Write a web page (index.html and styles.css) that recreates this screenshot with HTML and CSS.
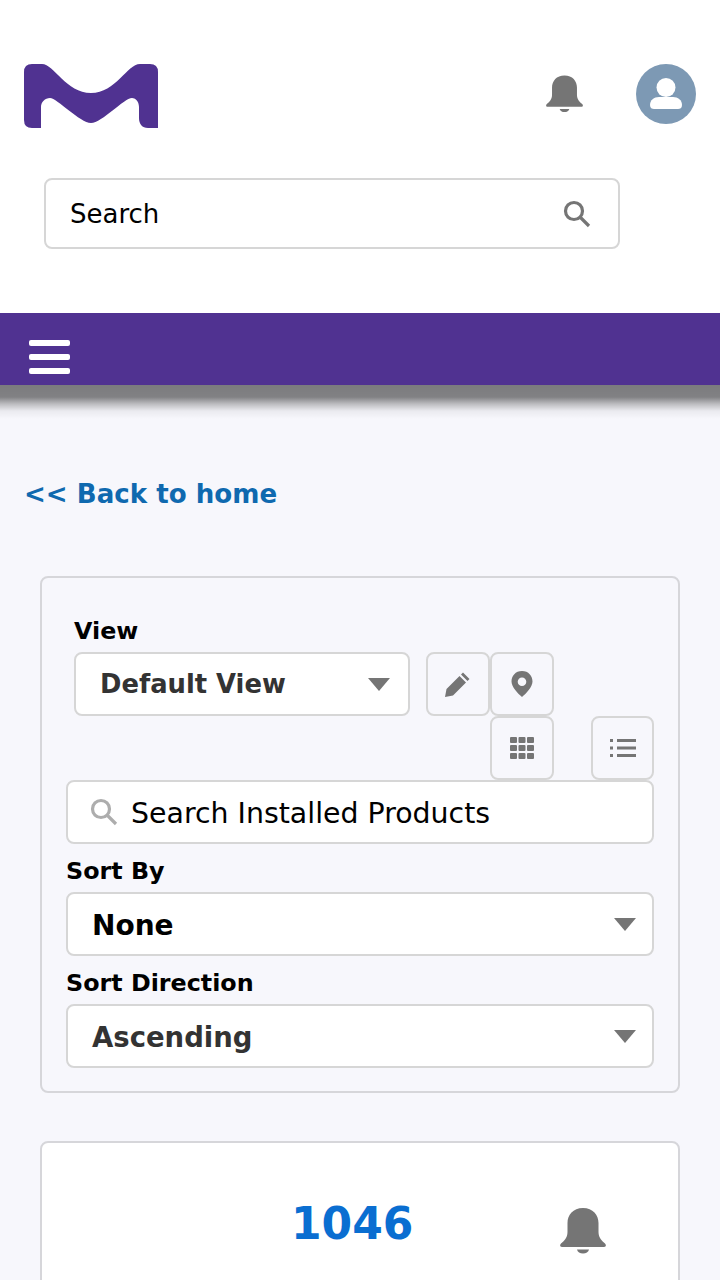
FILE: index.html
```html
<!DOCTYPE html>
<html lang="en">
<head>
<meta charset="utf-8">
<title>Installed Products</title>
<link rel="stylesheet" href="styles.css">
</head>
<body>
<header class="header">
  <div class="top-row">
    <svg class="logo" viewBox="0 0 134 64"><path d="M8 0H18C30 0 42 29 67 29C92 29 103 0 116 0H126Q134 0 134 8V64H124C118 64 115 60 115 54V43C115 37 111 34 108 34C100 34 78 59 67 59C56 59 33 34 26 34C21 34 17 38 17 43V64H8Q0 64 0 56V8Q0 0 8 0Z"/></svg>
    <svg class="bell bell-top" viewBox="0 0 46 46"><path d="M23 0C13 0 7.500 7 7.500 15V24C7.500 30 4 33 1 35.500C-.5 37 0 39 2 39H44C46 39 46.500 37 45 35.500C42 33 38.500 30 38.500 24V15C38.500 7 33 0 23 0Z"/><path d="M17 41.500H29C28.500 44 26 45.500 23 45.500S17.500 44 17 41.500Z"/></svg>
    <div class="avatar">
      <svg viewBox="0 0 60 60"><circle cx="30" cy="23.500" r="9.500"/><path d="M14 41C14 36 18 33 23 33H37C42 33 46 36 46 41C46 44 44 45 42 45H18C16 45 14 44 14 41Z"/></svg>
    </div>
  </div>
  <div class="global-search">
    <span>Search</span>
    <svg class="search-icon" viewBox="0 0 28 28"><circle cx="11" cy="11" r="8.500"/><path d="M17 17L26 26"/></svg>
  </div>
</header>
<nav class="navbar">
  <div class="burger"><i></i><i></i><i></i></div>
</nav>
<main class="main">
  <a class="back" href="#">&lt;&lt; Back to home</a>
  <section class="card filters">
    <div class="tool-row">
      <div class="view-field">
        <label class="label view-label">View</label>
        <div class="select view-select"><span>Default View</span><b class="caret"></b></div>
      </div>
      <button class="tool edit"><svg viewBox="0 0 28 28"><path d="M19 2.500L25.500 9L23.500 11L17 4.500ZM15.500 6L22 12.500L9 25.500L1 27L2.500 19Z"/></svg></button>
      <button class="tool"><svg viewBox="0 0 28 28"><path fill-rule="evenodd" d="M14 1C7.500 1 3.500 6 3.500 11.500C3.500 17 10 23.500 14 27C18 23.500 24.500 17 24.500 11.500C24.500 6 20.500 1 14 1ZM14 7.500A4.300 4.300 0 1 1 14 16.100A4.300 4.300 0 1 1 14 7.500Z"/></svg></button>
    </div>
    <div class="tool-row second">
      <button class="tool"><svg viewBox="0 0 28 28"><rect x="2" y="3" width="7" height="6" rx="1"/><rect x="10.500" y="3" width="7" height="6" rx="1"/><rect x="19" y="3" width="7" height="6" rx="1"/><rect x="2" y="11" width="7" height="6" rx="1"/><rect x="10.500" y="11" width="7" height="6" rx="1"/><rect x="19" y="11" width="7" height="6" rx="1"/><rect x="2" y="19" width="7" height="6" rx="1"/><rect x="10.500" y="19" width="7" height="6" rx="1"/><rect x="19" y="19" width="7" height="6" rx="1"/></svg></button>
      <button class="tool list"><svg viewBox="0 0 28 28"><rect x="1" y="5" width="3" height="3"/><rect x="1" y="12.500" width="3" height="3"/><rect x="1" y="20" width="3" height="3"/><rect x="8" y="5" width="19" height="3"/><rect x="8" y="12.500" width="19" height="3"/><rect x="8" y="20" width="19" height="3"/></svg></button>
    </div>
    <div class="product-search">
      <svg class="search-icon light" viewBox="0 0 28 28"><circle cx="11" cy="11" r="8.500"/><path d="M17 17L26 26"/></svg>
      <span>Search Installed Products</span>
    </div>
    <label class="label sort-label">Sort By</label>
    <div class="select wide black"><span>None</span><b class="caret"></b></div>
    <label class="label sort-label">Sort Direction</label>
    <div class="select wide"><span>Ascending</span><b class="caret"></b></div>
  </section>
  <section class="card count">
    <span class="number">1046</span>
    <svg class="bell bell-count" viewBox="0 0 46 46"><path d="M23 0C13 0 7.500 7 7.500 15V24C7.500 30 4 33 1 35.500C-.5 37 0 39 2 39H44C46 39 46.500 37 45 35.500C42 33 38.500 30 38.500 24V15C38.500 7 33 0 23 0Z"/><path d="M17 41.500H29C28.500 44 26 45.500 23 45.500S17.500 44 17 41.500Z"/></svg>
  </section>
</main>
</body>
</html>
```
FILE: styles.css
```css
* { box-sizing: border-box; }
html, body { margin: 0; padding: 0; height: 1280px; overflow: hidden; }
body { font-family: "DejaVu Sans", sans-serif; background: #f7f7fc; color: #000; }
.header { background: #fff; height: 313px; padding: 64px 24px 0; }
.top-row { display: flex; align-items: flex-start; height: 114px; }
.logo { width: 134px; height: 64px; fill: #503291; }
.bell { fill: #757575; display: block; }
.bell-top { width: 37px; height: 38px; margin: 11px 0 0 388px; }
.avatar { width: 60px; height: 60px; border-radius: 50%; background: #7d99b4; margin-left: 53px; }
.avatar svg { width: 60px; height: 60px; fill: #fff; display: block; }
.global-search { margin-left: 20px; width: 576px; height: 71px; border: 2px solid #d6d6d6; border-radius: 8px; display: flex; align-items: center; justify-content: space-between; padding: 0 27px 0 24px; font-size: 26px; background: #fff; }
.search-icon { width: 28px; height: 28px; fill: none; stroke: #757575; stroke-width: 3.200; flex: none; }
.search-icon.light { stroke: #adadad; }
.navbar { height: 72px; background: #503291; padding: 27px 0 0 29px; position: relative; }
.navbar::after { content: ""; position: absolute; left: 0; right: 0; top: 100%; height: 34px; background: linear-gradient(to bottom, rgba(0,0,0,.5) 0, rgba(0,0,0,.48) 12px, rgba(0,0,0,.24) 19px, rgba(0,0,0,.05) 26px, rgba(0,0,0,0) 34px); }
.burger { width: 41px; display: flex; flex-direction: column; gap: 8px; }
.burger i { display: block; height: 6px; background: #fff; border-radius: 2px; }
.main { padding: 93px 40px 0; }
.back { display: block; margin-left: -16px; font-size: 26.100px; line-height: 32px; font-weight: 700; color: #0f69af; text-decoration: none; }
.card { border: 2px solid #d6d6da; border-radius: 8px; }
.filters { margin-top: 66px; height: 517px; padding: 37px 24px 0; }
.tool-row { display: flex; }
.view-field { margin-left: 8px; width: 336px; margin-right: 16px; }
.label { display: block; font-size: 23.800px; line-height: 32px; font-weight: 700; color: #000; }
.view-label { margin-bottom: 5px; }
.sort-label { padding: 11px 0 5px; }
.select { height: 64px; background: #fff; border: 2px solid #d6d6d6; border-radius: 8px; display: flex; align-items: center; justify-content: space-between; padding: 0 18px 0 24px; font-size: 25.800px; font-weight: 700; color: #333; }
.view-select { width: 336px; }
.select.wide { font-size: 27.500px; padding-right: 16px; }
.select.wide span { padding-top: 2px; }
.select.black { color: #000; font-size: 28px; }
.caret { width: 0; height: 0; border-left: 11px solid transparent; border-right: 11px solid transparent; border-top: 13px solid #757575; }
.tool { width: 64px; height: 64px; padding: 0; background: transparent; border: 2px solid #d6d6d6; border-radius: 8px; display: flex; align-items: center; justify-content: center; align-self: flex-end; }
.tool svg { width: 28px; height: 28px; fill: #757575; }
.tool.list svg { margin-left: 2px; }
.second { padding-left: 424px; gap: 37px; }
.product-search { height: 64px; background: #fff; border: 2px solid #d6d6d6; border-radius: 8px; display: flex; align-items: center; gap: 13px; padding-left: 22px; font-size: 28.400px; }
.product-search span { padding-top: 2px; }
.count { margin-top: 48px; height: 300px; background: #fff; display: flex; align-items: flex-start; padding: 54px 0 0 249px; }
.number { font-size: 44px; line-height: 54px; font-weight: 700; color: #0a6ed1; }
.bell-count { width: 46px; height: 46px; margin: 11px 0 0 147px; }
```
